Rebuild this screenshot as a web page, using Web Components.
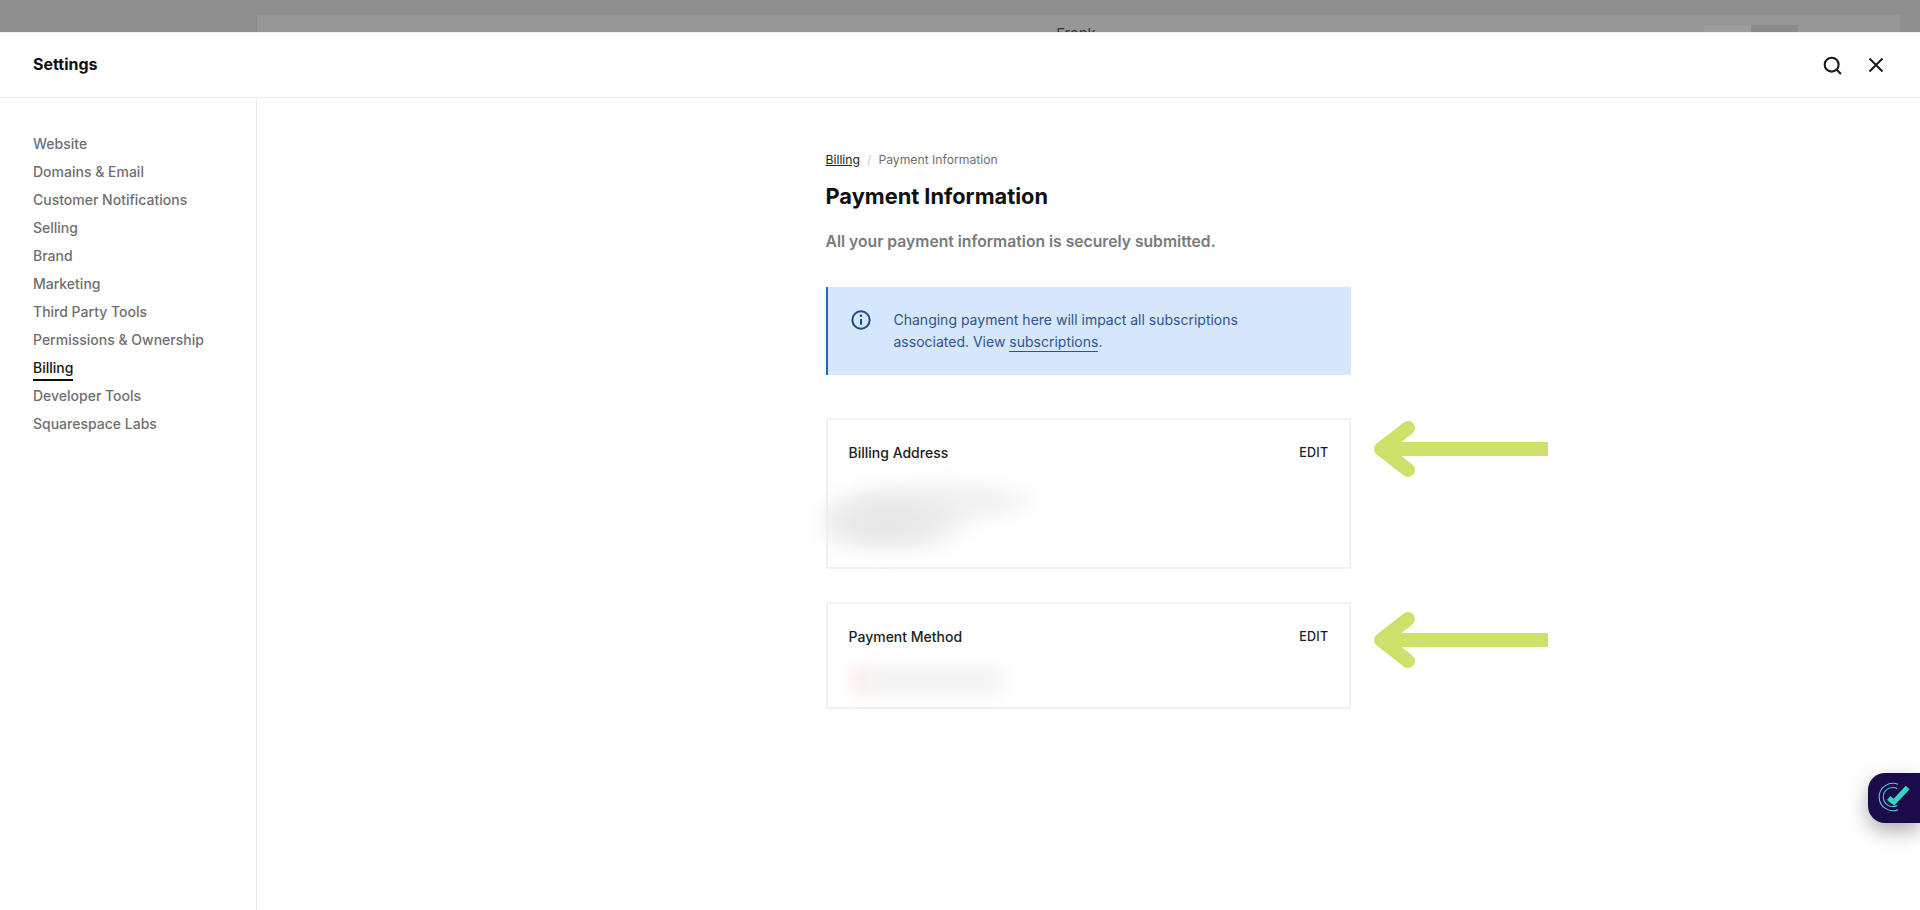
<!DOCTYPE html>
<html><head><meta charset="utf-8"><style>
html,body{margin:0;height:100%;background:#fff;overflow:hidden}
body{font-family:Inter,"Liberation Sans",sans-serif;color:#111}
</style></head><body>
<template id="t-backdrop"><style>
:host{display:flex;height:32px;background:#8f8f8f;overflow:hidden;padding:15px 20px 0 256px;box-sizing:border-box}
.p{flex:1;background:#979797;height:60px;display:flex;justify-content:center;position:relative;border-left:1px solid #8c8c8c}
.t{font-size:15px;color:#333;line-height:18px;margin-top:10px;margin-left:-5px}
.b{position:absolute;right:102px;top:10px;width:94px;height:40px;display:flex}
.b i{flex:1;background:#9d9d9d}.b i+i{background:#8a8a8a}
</style><div class="p"><span class="t">Frank</span><div class="b"><i></i><i></i></div></div></template>

<template id="t-header"><style>
:host{display:flex;align-items:center;justify-content:space-between;height:66px;padding:0 33px;box-sizing:border-box;border-bottom:1px solid #e9e9e9;border-top:1px solid #f0f0f0;background:#fff}
h1{font:700 16px/20px Inter,sans-serif;margin:0;color:#111;position:relative;top:-1px}
.i{display:flex;gap:25px;align-items:center;margin-right:2px}
svg{display:block}
</style><h1>Settings</h1><div class="i">
<svg width="19" height="19" viewBox="0 0 18 18" fill="none" stroke="#1a1a1a" stroke-width="2"><circle cx="8.2" cy="8.2" r="6.6"/><path d="M12.8 12.8L17 17"/></svg>
<svg width="18" height="18" viewBox="0 0 18 18" fill="none" stroke="#1a1a1a" stroke-width="2"><path d="M2.5 2.5L15.5 15.5M15.5 2.5L2.5 15.5"/></svg>
</div></template>

<template id="t-nav"><style>
:host{display:block;width:257px;box-sizing:border-box;border-right:1px solid #e9e9e9;padding:32px 0 0 33px;flex:none}
</style><slot></slot></template>

<template id="t-navitem"><style>
:host{display:block;height:28px;font:500 14px/28px Inter,sans-serif;color:#6f6f6f}
:host([active]) span{color:#161616;border-bottom:2px solid #111;padding-bottom:3px}
</style><span><slot></slot></span></template>

<template id="t-alert"><style>
:host{display:flex;box-sizing:border-box;height:88px;background:#d6e6fb;border-left:2px solid #1c6cae;padding:22px 24px 0 23px;gap:23px;color:#2f5590;font:400 14px/22px Inter,sans-serif}
svg{flex:none;margin-top:1px}
::slotted(a){color:inherit;text-decoration:none;border-bottom:1px solid #2f5590;padding-bottom:1px}
</style><svg width="20" height="20" viewBox="0 0 18 18" fill="none" stroke="#1d4a82"><circle cx="9" cy="9" r="7.8" stroke-width="1.8"/><path d="M9 8v5.2" stroke-width="1.8"/><circle cx="9" cy="5.2" r="1.1" fill="#1d4a82" stroke="none"/></svg>
<div><slot></slot></div></template>

<template id="t-card"><style>
:host{display:block;position:relative;box-sizing:border-box;border:2px solid #f1f1f1;padding:23px 20px 0 21px;background:#fff}
.h{display:flex;justify-content:space-between;align-items:center;height:20px}
.n{font:500 14px/20px Inter,sans-serif;color:#1c1c1c}
.e{font:500 12.5px/20px Inter,sans-serif;color:#1c1c1c;letter-spacing:.3px;margin-top:-1px}
svg{position:absolute;left:100%;margin-left:23px;top:var(--arrow-top,1px);overflow:visible}
</style><div class="h"><span class="n"></span><span class="e">EDIT</span></div><slot></slot>
<svg width="176" height="58" viewBox="0 0 176 58" fill="none" stroke="#cde26a" stroke-width="14"><path d="M36 7L9 28L36 49" stroke-linecap="round" stroke-linejoin="round"/><path d="M9 28H176"/></svg></template>

<template id="t-widget"><style>
:host{display:block;position:absolute;right:0;top:773px;width:52px;height:50px;background:#1c0b4b;border-radius:17px 0 0 17px;box-shadow:0 8px 20px rgba(0,0,0,.32)}
svg{position:absolute;left:8px;top:6px}
</style><svg width="38" height="36" viewBox="0 0 36 34" fill="none"><path d="M21 29A13 13 0 1 1 21 5" stroke="#5fc8d8" stroke-width="1"/><path d="M20 25A9 9 0 1 1 20 9" stroke="#5fc8d8" stroke-width="1"/><path d="M12 18L17 22L30 8" stroke="#35d6c0" stroke-width="5"/></svg></template>

<template id="t-page"><style>
:host{display:block;flex:1;padding:0 0 0 568.5px;box-sizing:border-box}
.w{width:525px;padding-top:53px}
.c{font:400 12.2px/18px Inter,sans-serif;color:#6f6f6f;display:flex;gap:7px;height:18px}
.c u{color:#222}.c s{text-decoration:none;color:#ccc}
h2{font:700 21.8px/30px Inter,sans-serif;margin:12px 0 0;color:#111}
p{font:600 15.7px/22px Inter,sans-serif;color:#7a7a7a;margin:20px 0 0}
.g{display:flex;flex-direction:column}
</style><div class="w"><div class="c"><u>Billing</u><s>/</s><span>Payment Information</span></div>
<h2>Payment Information</h2><p>All your payment information is securely submitted.</p>
<div class="g" style="margin-top:34px"><slot></slot></div></div></template>

<x-backdrop></x-backdrop>
<x-header></x-header>
<div style="display:flex;height:812px">
<x-nav><x-navitem>Website</x-navitem><x-navitem>Domains &amp; Email</x-navitem><x-navitem>Customer Notifications</x-navitem><x-navitem>Selling</x-navitem><x-navitem>Brand</x-navitem><x-navitem>Marketing</x-navitem><x-navitem>Third Party Tools</x-navitem><x-navitem>Permissions &amp; Ownership</x-navitem><x-navitem active>Billing</x-navitem><x-navitem>Developer Tools</x-navitem><x-navitem>Squarespace Labs</x-navitem></x-nav>
<x-page>
<x-alert>Changing payment here will impact all subscriptions<br>associated. View <a>subscriptions</a>.</x-alert>
<x-card name="Billing Address" style="height:151px;margin-top:43px;--arrow-top:1px"><div style="width:215px;height:88px;margin:14px 0 0 -26px;background:radial-gradient(ellipse 42% 42% at 30% 50%,#e6e6e6 0,#ebebeb 55%,transparent 100%),radial-gradient(ellipse 50% 28% at 55% 28%,#f1f1f1 0,#f3f3f3 60%,transparent 100%);filter:blur(8px)"></div></x-card>
<x-card name="Payment Method" style="height:107px;margin-top:33px;--arrow-top:8px"><div style="width:160px;height:32px;margin:18px 0 0 0;background:linear-gradient(90deg,#fceeeb,#f5f5f5 25%,#f5f5f5 85%,#fafafa);border-radius:12px;filter:blur(6px)"></div></x-card>
</x-page></div>
<x-widget></x-widget>
<script>
function def(n,init){customElements.define('x-'+n,class extends HTMLElement{constructor(){super();const r=this.attachShadow({mode:'open'});r.appendChild(document.getElementById('t-'+n).content.cloneNode(true));}connectedCallback(){if(init)init(this)}})}
def('backdrop');def('header');def('nav');def('navitem');def('alert');def('widget');def('page');
def('card',e=>{e.shadowRoot.querySelector('.n').textContent=e.getAttribute('name')});
</script>
</body></html>
